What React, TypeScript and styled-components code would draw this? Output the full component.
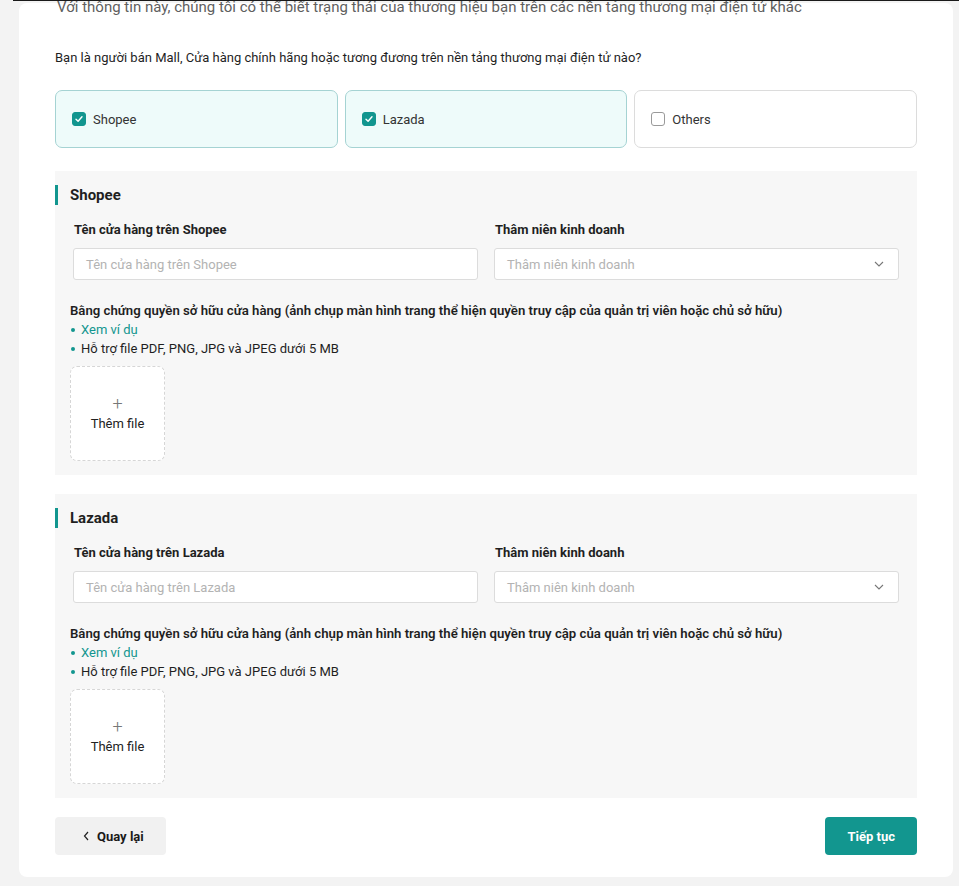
import styled, { createGlobalStyle } from "styled-components";

const colors = {
  teal: "#12968f",
  tealSoft: "#eefbfa",
  tealBorder: "#a5d3d3",
  text: "#1f1f1f",
  muted: "#5f5f5f",
  hint: "#b3b3b3",
  line: "#dcdcdc",
  panel: "#f7f7f7",
  page: "#f3f3f3",
};

const GlobalStyle = createGlobalStyle`
  html, body {
    margin: 0;
    padding: 0;
    background: ${colors.page};
    font-family: Roboto, "Noto Sans", "Liberation Sans", sans-serif;
    color: ${colors.text};
    overflow: hidden;
  }
  * { box-sizing: border-box; }
`;

// ── Layout ────────────────────────────────────────────────────────────────────

const Page = styled.div`
  padding: 0 6px 9px 19px;
  height: 886px;
  display: flex;
  flex-direction: column;
  justify-content: flex-end;
`;

const TopRule = styled.div`
  position: fixed;
  top: 0;
  left: 13px;
  right: 0;
  height: 1px;
  background: #1a1a1a;
  z-index: 2;
`;

const Card = styled.div`
  background: #fff;
  border-radius: 8px;
  padding: 0 36px 22px 36px;
  display: flex;
  flex-direction: column;
`;

const Intro = styled.p`
  margin: 0;
  font-size: 15px;
  line-height: 20px;
  color: ${colors.muted};
  padding-left: 2px;
  margin-top: -6px;
`;

const Question = styled.p`
  margin: 32px 0 23px;
  font-size: 13px;
  line-height: 18px;
`;

const OptionRow = styled.div`
  display: grid;
  grid-template-columns: repeat(3, 1fr);
  gap: 7px;
  margin-bottom: 23px;
`;

const Option = styled.label<{ $checked: boolean }>`
  height: 58px;
  display: flex;
  align-items: center;
  gap: 7px;
  padding: 0 16px;
  border-radius: 7px;
  border: 1px solid ${p => (p.$checked ? colors.tealBorder : colors.line)};
  background: ${p => (p.$checked ? colors.tealSoft : "#fff")};
  font-size: 13px;
  color: #333;
`;

const Box = styled.span<{ $checked: boolean }>`
  width: 14px;
  height: 14px;
  border-radius: 3px;
  display: inline-flex;
  align-items: center;
  justify-content: center;
  background: ${p => (p.$checked ? colors.teal : "#fff")};
  border: 1px solid ${p => (p.$checked ? colors.teal : "#9a9a9a")};
`;

const Section = styled.section`
  background: ${colors.panel};
  padding: 14px 18px 14px 0;
  & + & { margin-top: 19px; }
`;

const SectionTitle = styled.h3`
  margin: 0 0 16px;
  border-left: 3px solid ${colors.teal};
  padding-left: 12px;
  font-size: 15px;
  line-height: 20px;
  font-weight: 700;
`;

const FieldGrid = styled.div`
  display: grid;
  grid-template-columns: 1fr 1fr;
  gap: 16px;
  padding-left: 18px;
  margin-bottom: 21px;
`;

const Field = styled.div`
  display: flex;
  flex-direction: column;
  gap: 9px;
`;

const Label = styled.div`
  font-size: 13px;
  line-height: 18px;
  font-weight: 700;
  padding-left: 1px;
`;

const Input = styled.div`
  height: 32px;
  background: #fff;
  border: 1px solid ${colors.line};
  border-radius: 3px;
  display: flex;
  align-items: center;
  justify-content: space-between;
  padding: 0 14px 0 12px;
  font-size: 13px;
  color: ${colors.hint};
`;

const Proof = styled.div`
  padding-left: 15px;
`;

const ProofLabel = styled.div`
  font-size: 13.2px;
  line-height: 19px;
  font-weight: 600;
`;

const Bullet = styled.div<{ $link?: boolean }>`
  font-size: 13px;
  line-height: 19px;
  color: ${p => (p.$link ? colors.teal : colors.text)};
  display: flex;
  align-items: center;
  gap: 6px;
  padding-left: 1px;
  &::before {
    content: "";
    width: 4px;
    height: 4px;
    border-radius: 50%;
    background: ${colors.teal};
  }
`;

const Upload = styled.div`
  margin-top: 8px;
  width: 95px;
  height: 95px;
  background: #fff;
  border: 1px dashed #d6d6d6;
  border-radius: 7px;
  display: flex;
  flex-direction: column;
  align-items: center;
  justify-content: center;
  gap: 4px;
  font-size: 13px;
  color: #222;
`;

const Plus = styled.span`
  font-size: 18px;
  line-height: 16px;
  font-weight: 300;
  color: #777;
`;

const Footer = styled.div`
  display: flex;
  justify-content: space-between;
  margin-top: 19px;
`;

const Button = styled.button<{ $primary?: boolean }>`
  height: 38px;
  border: none;
  border-radius: 4px;
  display: inline-flex;
  align-items: center;
  gap: 8px;
  font-family: inherit;
  font-size: 13px;
  font-weight: 700;
  padding: ${p => (p.$primary ? "0 22px" : "0 22px 0 28px")};
  background: ${p => (p.$primary ? colors.teal : "#f1f1f1")};
  color: ${p => (p.$primary ? "#fff" : "#1a1a1a")};
`;

// ── Pieces ────────────────────────────────────────────────────────────────────

function Check({ checked }: { checked: boolean }) {
  return (
    <Box $checked={checked}>
      {checked && (
        <svg width="10" height="10" viewBox="0 0 10 10">
          <path d="M2 5.2 L4.1 7.3 L8 2.8" fill="none" stroke="#fff" strokeWidth="1.4" strokeLinecap="round" strokeLinejoin="round" />
        </svg>
      )}
    </Box>
  );
}

function Chevron({ dir = "down" }: { dir?: "down" | "left" }) {
  return dir === "down" ? (
    <svg width="10" height="6" viewBox="0 0 10 6">
      <path d="M1 1 L5 5 L9 1" fill="none" stroke="#777" strokeWidth="1.1" />
    </svg>
  ) : (
    <svg width="6" height="10" viewBox="0 0 6 10">
      <path d="M5 1 L1.5 5 L5 9" fill="none" stroke="#222" strokeWidth="1.2" />
    </svg>
  );
}

function StoreSection({ name }: { name: string }) {
  return (
    <Section>
      <SectionTitle>{name}</SectionTitle>
      <FieldGrid>
        <Field>
          <Label>Tên cửa hàng trên {name}</Label>
          <Input>Tên cửa hàng trên {name}</Input>
        </Field>
        <Field>
          <Label>Thâm niên kinh doanh</Label>
          <Input>
            Thâm niên kinh doanh
            <Chevron />
          </Input>
        </Field>
      </FieldGrid>
      <Proof>
        <ProofLabel>
          Bằng chứng quyền sở hữu cửa hàng (ảnh chụp màn hình trang thể hiện quyền truy cập của quản trị viên hoặc chủ sở hữu)
        </ProofLabel>
        <Bullet $link>Xem ví dụ</Bullet>
        <Bullet>Hỗ trợ file PDF, PNG, JPG và JPEG dưới 5 MB</Bullet>
        <Upload>
          <Plus>+</Plus>
          Thêm file
        </Upload>
      </Proof>
    </Section>
  );
}

const platforms = [
  { name: "Shopee", checked: true },
  { name: "Lazada", checked: true },
  { name: "Others", checked: false },
];

export default function App() {
  return (
    <>
      <GlobalStyle />
      <TopRule />
      <Page>
        <Card>
          <Intro>
            Với thông tin này, chúng tôi có thể biết trạng thái của thương hiệu bạn trên các nền tảng thương mại điện tử khác
          </Intro>
          <Question>
            Bạn là người bán Mall, Cửa hàng chính hãng hoặc tương đương trên nền tảng thương mại điện tử nào?
          </Question>
          <OptionRow>
            {platforms.map(p => (
              <Option key={p.name} $checked={p.checked}>
                <Check checked={p.checked} />
                {p.name}
              </Option>
            ))}
          </OptionRow>
          {platforms.filter(p => p.checked).map(p => (
            <StoreSection key={p.name} name={p.name} />
          ))}
          <Footer>
            <Button>
              <Chevron dir="left" />
              Quay lại
            </Button>
            <Button $primary>Tiếp tục</Button>
          </Footer>
        </Card>
      </Page>
    </>
  );
}
